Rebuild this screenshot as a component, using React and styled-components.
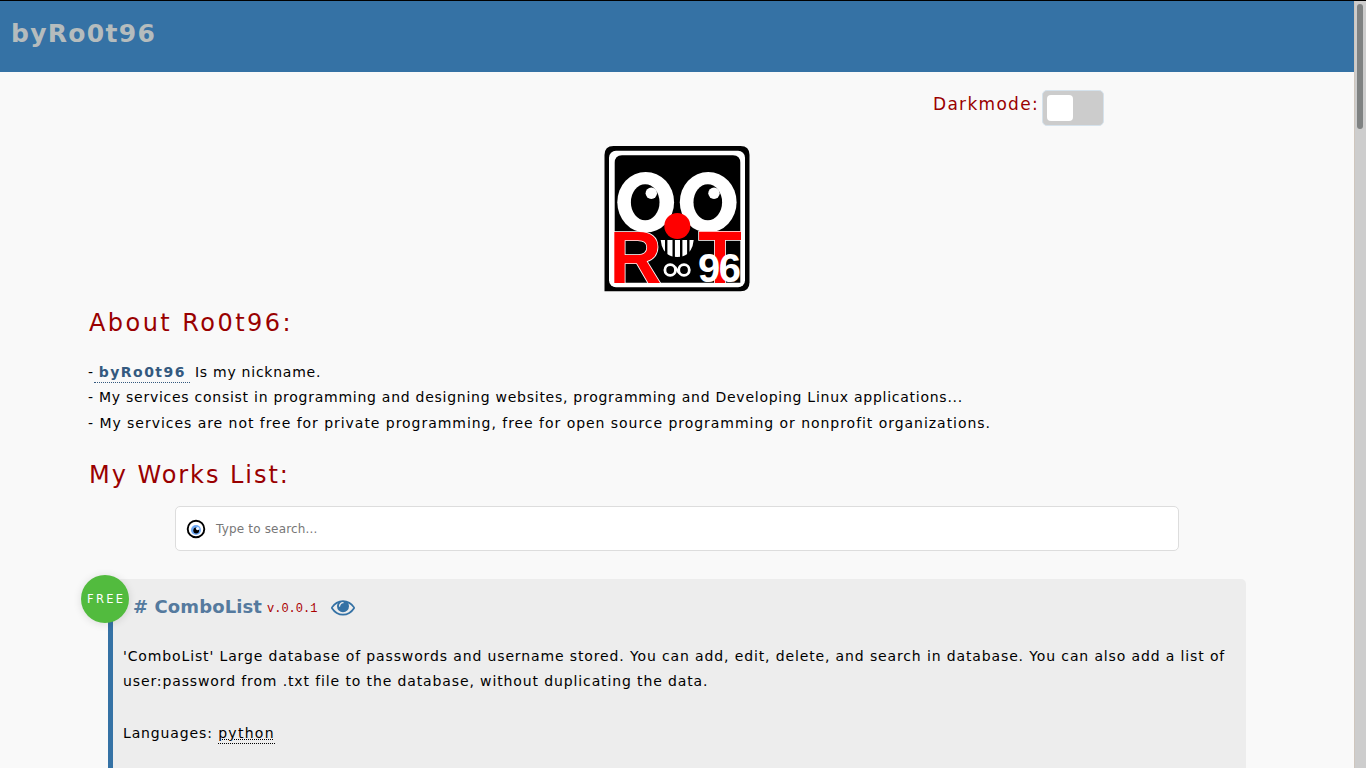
import React from "react";
import styled, { createGlobalStyle } from "styled-components";

const Global = createGlobalStyle`
  *, *::before, *::after { box-sizing: border-box; }
  html, body { margin: 0; height: 768px; overflow: hidden; }
  body { background: #f9f9f9; color: #000; font: 14px/26px "DejaVu Sans", sans-serif; }
  h1, h2, h3, p { margin: 0; }
`;

const Window = styled.div`
  display: flex;
  width: 1366px;
  height: 768px;
  border-top: 1px solid #000;
  overflow: hidden;
`;

const Page = styled.div`
  flex: 1;
  height: 767px;
  overflow: hidden;
`;

const ScrollTrack = styled.div`
  width: 12px;
  height: 767px;
  padding: 3px 3px 0 2px;
  background: #cdcdcd;
  border-left: 1px solid #cfc6bd;
`;

const ScrollThumb = styled.div`
  height: 125px;
  border-radius: 3px;
  background: #7f8282;
`;

const Header = styled.header`
  height: 71px;
  padding: 17px 0 0 11px;
  background: #3572a5;
`;

const Brand = styled.h1`
  color: #b5bcbd;
  font-size: 25px;
  line-height: 32px;
  letter-spacing: ${(p) => p.$spacing}px;
  white-space: nowrap;
`;

const Main = styled.main`
  padding: 18px 108px 0 89px;
`;

const ModeRow = styled.div`
  display: flex;
  justify-content: flex-end;
  gap: 5px;
  padding-right: 142px;
`;

const ModeLabel = styled.span`
  width: 104px;
  color: #900;
  font-size: 17px;
  line-height: 29px;
  letter-spacing: ${(p) => p.$spacing}px;
  white-space: nowrap;
`;

const Toggle = styled.div`
  width: 62px;
  height: 36px;
  padding: 4px;
  border: 1px solid #d5e2ec;
  border-radius: 5px;
  background: #ccc;
`;

const Knob = styled.div`
  width: 26px;
  height: 26px;
  border-radius: 4px;
  background: #fff;
`;

const LogoRow = styled.div`
  display: flex;
  justify-content: center;
  height: 146px;
  margin: 20px -19px 0 0;
`;

const Heading = styled.h2`
  height: 36px;
  margin-top: ${(p) => p.$top}px;
  color: #900;
  font-size: 24px;
  font-weight: 400;
  line-height: 36px;
  letter-spacing: ${(p) => p.$spacing}px;
  white-space: nowrap;
`;

const About = styled.div`
  margin: 18px 0 0 -1px;
`;

const Line = styled.p`
  height: ${(p) => p.$height || 26}px;
  letter-spacing: ${(p) => p.$spacing}px;
  white-space: nowrap;
`;

const Nick = styled.strong`
  display: inline-block;
  height: 21px;
  margin-right: 5px;
  padding: 0 4px 0 5px;
  border-bottom: 1px dotted #34597f;
  color: #34597f;
  line-height: 20px;
  letter-spacing: ${(p) => p.$spacing}px;
`;

const Search = styled.div`
  display: flex;
  align-items: center;
  gap: 10px;
  width: 1004px;
  height: 45px;
  margin: 13px 0 0 86px;
  padding-left: 10px;
  border: 1px solid #ddd;
  border-radius: 5px;
  background: #fff;
  color: #777;
  font-size: 12px;
  letter-spacing: ${(p) => p.$spacing}px;
`;

const Card = styled.article`
  position: relative;
  width: 1138px;
  height: 300px;
  margin: 28px 0 0 19px;
  padding: 14px 0 0 10px;
  border-left: 5px solid #3572a5;
  border-radius: 5px;
  background: #ededed;
`;

const Badge = styled.div`
  position: absolute;
  top: -4px;
  left: -32px;
  width: 48px;
  height: 48px;
  padding-left: 6px;
  border-radius: 50%;
  background: #52bb3e;
  box-shadow: 0 1px 8px rgba(0, 0, 0, 0.12);
  color: #fff;
  font-size: 11.5px;
  line-height: 48px;
  letter-spacing: ${(p) => p.$spacing}px;
  white-space: nowrap;
`;

const CardHead = styled.div`
  display: flex;
  align-items: center;
  height: 27px;
  margin: 0 0 23px 10px;
`;

const CardTitle = styled.h3`
  width: 134px;
  color: #557a9e;
  font-size: 18px;
  letter-spacing: ${(p) => p.$spacing}px;
  white-space: nowrap;
`;

const Version = styled.span`
  width: 64px;
  padding-top: 4px;
  color: #a00;
  font: 12px/20px "Liberation Mono", monospace;
`;

const Language = styled.span`
  display: inline-block;
  height: 22px;
  border-bottom: 1px dotted #000;
  line-height: 22px;
  letter-spacing: 1.3px;
  text-decoration: underline dotted 1px;
  text-underline-offset: 1px;
`;

const EyeMark = () => (
  <svg width="24" height="24" viewBox="0 0 1792 1792" fill="#3572a5">
    <path d="M1664 960q-152-236-381-353 61 104 61 225 0 185-131.5 316.5t-316.5 131.5-316.5-131.5-131.5-316.5q0-121 61-225-229 117-381 353 133 205 333.5 326.5t434.5 121.5 434.5-121.5 333.5-326.5zm-720-384q0-20-14-34t-34-14q-125 0-214.5 89.5t-89.5 214.5q0 20 14 34t34 14 34-14 14-34q0-86 61-147t147-61q20 0 34-14t14-34zm848 384q0 34-20 69-140 230-376.5 368.5t-499.5 138.5-499.5-139-376.5-368q-20-35-20-69t20-69q140-229 376.5-368t499.5-139 499.5 139 376.5 368q20 35 20 69z" />
  </svg>
);

const SearchEye = () => (
  <svg width="20" height="20" viewBox="0 0 20 20">
    <circle cx="10" cy="10" r="8.3" fill="#fff" stroke="#000" strokeWidth="1.9" />
    <circle cx="10" cy="11" r="5" fill="#6faaf5" />
    <circle cx="10.2" cy="11.5" r="2.9" fill="#000" />
    <circle cx="11.6" cy="9.6" r="1.7" fill="#e8f2ff" />
  </svg>
);

const Logo = () => (
  <svg width="146" height="146" viewBox="0 0 146 146" fontFamily="Liberation Sans, sans-serif" fontWeight="700">
    <path d="M.5 145.3V9Q.5 0 9.5 0H136.5Q145.5 0 145.5 9V136.3Q145.5 145.3 136.5 145.3Z" />
    <rect x="5" y="4.7" width="136" height="136.6" rx="7" fill="#fff" />
    <path d="M10.7 136.7V17Q10.7 9.3 18 9.3H129Q136.3 9.3 136.3 17V136.7Z" />
    <g fill="#fff">
      <ellipse cx="41.7" cy="56.2" rx="28.4" ry="30.3" />
      <ellipse cx="104.2" cy="56.2" rx="28.4" ry="30.3" />
    </g>
    <ellipse cx="41.2" cy="56.2" rx="14.3" ry="18" />
    <ellipse cx="103.8" cy="56.2" rx="14.3" ry="18" />
    <circle cx="47.3" cy="47.2" r="5.7" fill="#fff" />
    <circle cx="110" cy="47.2" r="5.7" fill="#fff" />
    <g fill="#f00" stroke="#fff" strokeWidth="1.6" paintOrder="stroke" fontSize="73.5">
      <text x="5.6" y="136.7" textLength="52" lengthAdjust="spacingAndGlyphs">R</text>
      <text x="94.2" y="136.7" textLength="43.5" lengthAdjust="spacingAndGlyphs">T</text>
    </g>
    <text x="94" y="136.2" fill="#fff" fontSize="40" textLength="43" lengthAdjust="spacing">96</text>
    <circle cx="73.3" cy="80" r="13" fill="#f00" />
    <path d="M56.7 94H89.7Q88 111 73.2 111Q58.400 111 56.7 94Z" fill="#fff" />
    <path d="M62.200 94V111M69.7 94V112M77.2 94V112M84.3 94V111" stroke="#000" strokeWidth="2.4" />
    <g fill="none" stroke="#fff" strokeWidth="2.8">
      <circle cx="66.2" cy="124" r="5.3" />
      <circle cx="80" cy="124" r="5.3" />
    </g>
    <path d="M71 121L75.200 127" stroke="#fff" strokeWidth="2.4" />
  </svg>
);

export default function App() {
  return (
    <Window>
      <Global />
      <Page>
        <Header>
          <Brand $spacing={1.3}>byRo0t96</Brand>
        </Header>
        <Main>
          <ModeRow>
            <ModeLabel $spacing={1.3}>Darkmode:</ModeLabel>
            <Toggle><Knob /></Toggle>
          </ModeRow>
          <LogoRow><Logo /></LogoRow>
          <Heading $top={13} $spacing={2.45}>About Ro0t96:</Heading>
          <About>
            <Line $height={25} $spacing={0.75}>-<Nick $spacing={1.45}>byRo0t96</Nick>Is my nickname.</Line>
            <Line $spacing={0.74}>- My services consist in programming and designing websites, programming and Developing Linux applications...</Line>
            <Line $spacing={0.96}>- My services are not free for private programming, free for open source programming or nonprofit organizations.</Line>
          </About>
          <Heading $top={21} $spacing={1.95}>My Works List:</Heading>
          <Search $spacing={0.18}><SearchEye />Type to search...</Search>
          <Card>
            <Badge $spacing={2.3}>FREE</Badge>
            <CardHead>
              <CardTitle $spacing={0.1}># ComboList</CardTitle>
              <Version>v.0.0.1</Version>
              <EyeMark />
            </CardHead>
            <Line $height={25} $spacing={0.87}>'ComboList' Large database of passwords and username stored. You can add, edit, delete, and search in database. You can also add a list of</Line>
            <Line $height={52} $spacing={0.88}>user:password from .txt file to the database, without duplicating the data.</Line>
            <Line $spacing={0.87}>Languages: <Language>python</Language></Line>
          </Card>
        </Main>
      </Page>
      <ScrollTrack><ScrollThumb /></ScrollTrack>
    </Window>
  );
}
